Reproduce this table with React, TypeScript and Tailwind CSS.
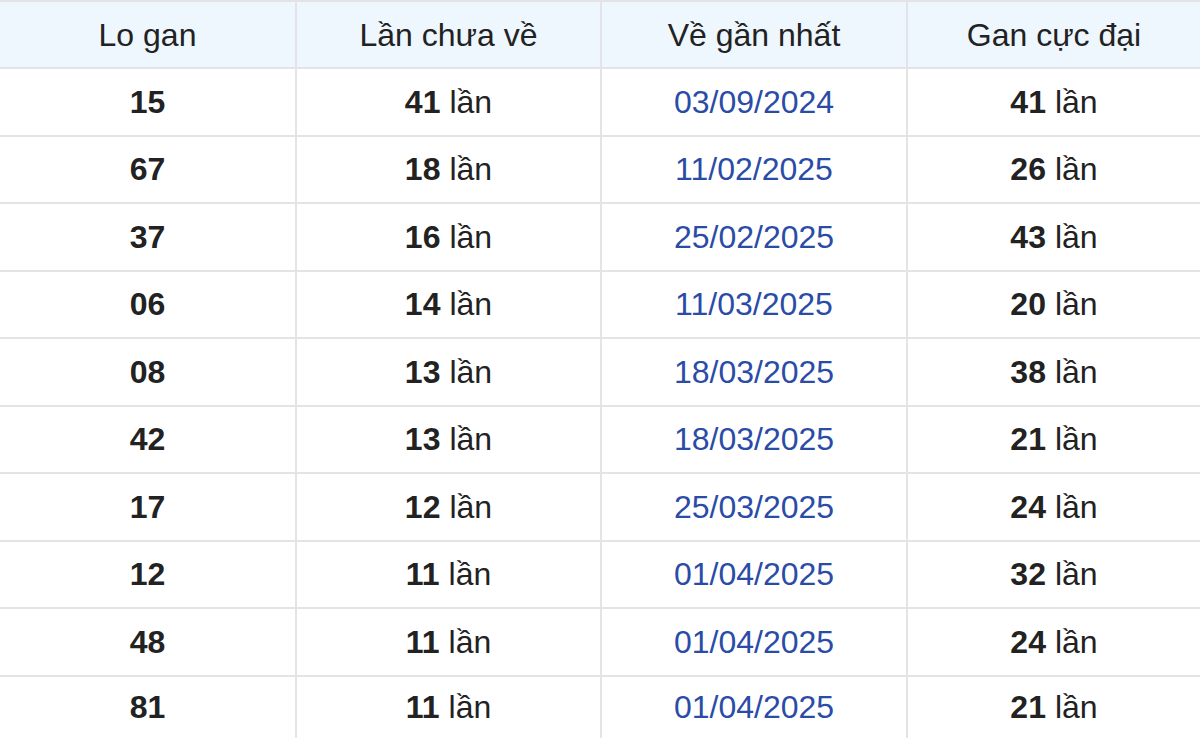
import React from "react";

const rows: [string, string, string, string][] = [
  ["15", "41", "03/09/2024", "41"],
  ["67", "18", "11/02/2025", "26"],
  ["37", "16", "25/02/2025", "43"],
  ["06", "14", "11/03/2025", "20"],
  ["08", "13", "18/03/2025", "38"],
  ["42", "13", "18/03/2025", "21"],
  ["17", "12", "25/03/2025", "24"],
  ["12", "11", "01/04/2025", "32"],
  ["48", "11", "01/04/2025", "24"],
  ["81", "11", "01/04/2025", "21"],
];

const cell = "flex items-center justify-center";

export default function App() {
  return (
    <div
      className="w-[1200px] h-[752px] bg-white overflow-hidden text-[32px] text-[#222222]"
      style={{ fontFamily: '"Liberation Sans", Arial, sans-serif' }}
    >
      <div className="grid grid-cols-[297px_305px_306px_292px] h-[69px] border-t-2 border-b-2 border-[#e2e4e8] bg-[#eef6fe]">
        <div className={`${cell} border-r-2 border-[#e2e4e8]`}>Lo gan</div>
        <div className={`${cell} border-r-2 border-[#e2e4e8]`}>Lần chưa về</div>
        <div className={`${cell} border-r-2 border-[#e2e4e8]`}>Về gần nhất</div>
        <div className={cell}>Gan cực đại</div>
      </div>
      {rows.map((r, i) => (
        <div
          key={i}
          className={`grid grid-cols-[297px_305px_306px_292px] ${
            i === rows.length - 1 ? "h-[61px]" : "h-[67.5px] border-b-2"
          } border-[#e4e4e4]`}
        >
          <div className={`${cell} border-r-2 border-[#e4e4e4] font-bold`}>{r[0]}</div>
          <div className={`${cell} border-r-2 border-[#e4e4e4]`}>
            <span className="font-bold">{r[1]}</span>
            <span className="ml-[9px]">lần</span>
          </div>
          <div className={`${cell} border-r-2 border-[#e4e4e4] text-[#2a4ca6]`}>{r[2]}</div>
          <div className={cell}>
            <span className="font-bold">{r[3]}</span>
            <span className="ml-[9px]">lần</span>
          </div>
        </div>
      ))}
    </div>
  );
}
